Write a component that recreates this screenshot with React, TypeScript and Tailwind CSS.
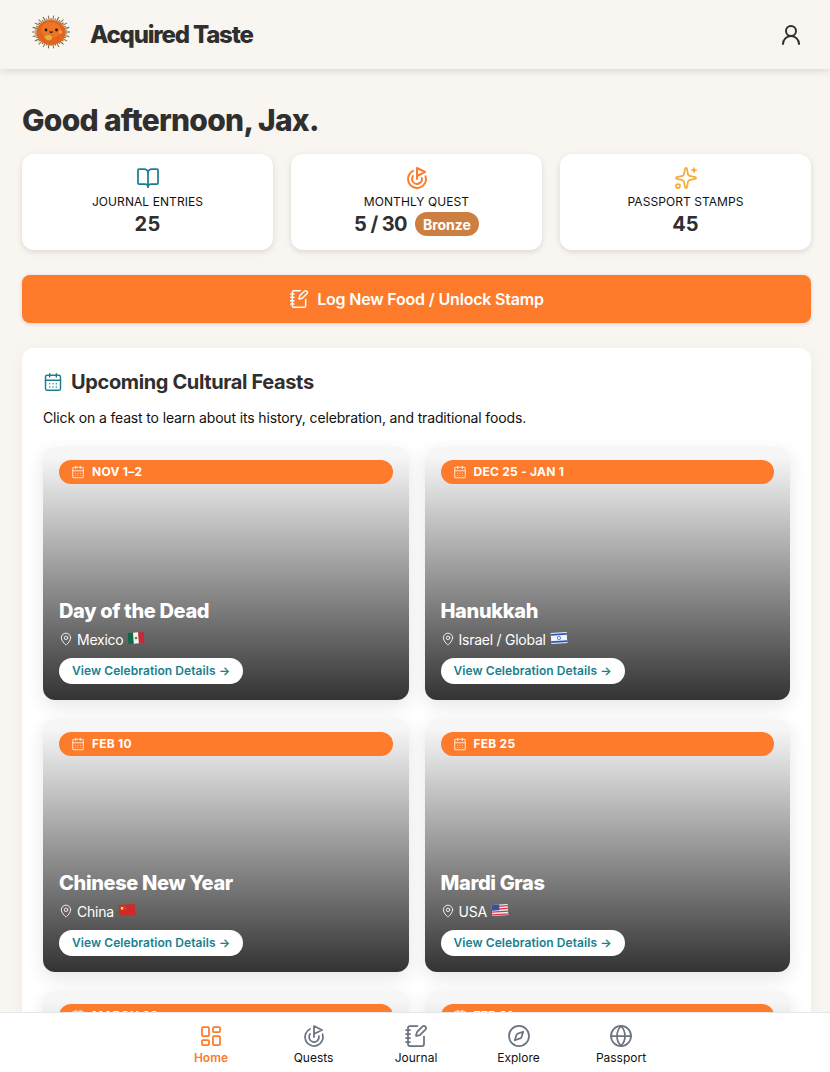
import { BookOpen, Goal, Sparkles, NotebookPen, CalendarDays, MapPin, LayoutDashboard, Compass, Globe, UserRound } from 'lucide-react';

const font = { fontFamily: 'Inter, "Liberation Sans", sans-serif' };

function Urchin() {
  const spikes = Array.from({ length: 44 }, (_, i) => (i / 44) * Math.PI * 2);
  return (
    <svg width="42" height="36" viewBox="0 0 42 36" className="shrink-0 -mt-[6px]">
      {spikes.map((a, i) => {
        const len = i % 2 === 0 ? 19 : 16.5;
        return (
          <line
            key={i}
            x1={20 + Math.cos(a) * 11}
            y1={18 + Math.sin(a) * 10}
            x2={20 + Math.cos(a) * len}
            y2={18 + Math.sin(a) * (len - 2.5)}
            stroke={i % 3 === 0 ? '#5f6a4c' : '#94794a'}
            strokeWidth="1.1"
          />
        );
      })}
      <ellipse cx="20" cy="18.5" rx="14.5" ry="12.5" fill="#e4641c" />
      <ellipse cx="20" cy="16" rx="10" ry="8" fill="#ef7426" />
      <circle cx="15" cy="16" r="1.4" fill="#2a1a10" />
      <circle cx="25.5" cy="16" r="1.4" fill="#2a1a10" />
      <path d="M18 17.5 q2.2 3 4.4 0 z" fill="#3a1a10" />
      <circle cx="29.5" cy="18" r="1.7" fill="#f3a05a" />
      <path d="M12.5 22 q5 -3 9 -0.5 q1.5 4 -3 5.5 q-4 0.5 -6 -5 z" fill="#f4a63c" stroke="#9a5a18" strokeWidth="0.5" />
    </svg>
  );
}

function Flag({ country }: { country: string }) {
  return (
    <svg width="18" height="14" viewBox="0 0 18 14" className="shrink-0 -mt-[3px]">
      <g transform="rotate(-4 9 7)">
        {country === 'mx' && (
          <>
            <rect x="1" y="1.5" width="5.4" height="11" fill="#0f6b48" />
            <rect x="6.4" y="1.5" width="5.2" height="11" fill="#f4f4f0" />
            <rect x="11.6" y="1.5" width="5.4" height="11" fill="#c8283a" />
            <circle cx="9" cy="7" r="1.3" fill="#8a6a3a" />
          </>
        )}
        {country === 'il' && (
          <>
            <rect x="1" y="1.5" width="16" height="11" fill="#f2f4f8" />
            <rect x="1" y="2.5" width="16" height="1.8" fill="#2a55b8" />
            <rect x="1" y="9.7" width="16" height="1.8" fill="#2a55b8" />
            <circle cx="9" cy="7" r="1.6" fill="none" stroke="#2a55b8" strokeWidth="0.7" />
          </>
        )}
        {country === 'cn' && (
          <>
            <rect x="1" y="1.5" width="16" height="11" fill="#cf2a27" />
            <circle cx="4.2" cy="4.8" r="1.5" fill="#f6d33c" />
            <circle cx="7.2" cy="3.2" r="0.4" fill="#f6d33c" />
            <circle cx="7.6" cy="5.4" r="0.4" fill="#f6d33c" />
          </>
        )}
        {country === 'us' && (
          <>
            <rect x="1" y="1.5" width="16" height="11" fill="#f3f3f3" />
            <rect x="1" y="2.6" width="16" height="1.3" fill="#d0344a" />
            <rect x="1" y="5.3" width="16" height="1.3" fill="#d0344a" />
            <rect x="1" y="8" width="16" height="1.3" fill="#d0344a" />
            <rect x="1" y="10.7" width="16" height="1.3" fill="#d0344a" />
            <rect x="1" y="1.5" width="7.5" height="5.6" fill="#3c4f9c" />
          </>
        )}
      </g>
    </svg>
  );
}

function Stat({ icon, label, children }: { icon: React.ReactNode; label: string; children: React.ReactNode }) {
  return (
    <div className="h-[96px] bg-white rounded-xl shadow-[0_2px_6px_rgba(0,0,0,0.12)] flex flex-col items-center pt-[12px]">
      {icon}
      <div className="mt-[4px] text-[12px] leading-[16px] tracking-[0.07px] text-[#111]">{label}</div>
      <div className="mt-[1px] h-[26px] flex items-center gap-2 text-[20px] font-bold tracking-[0.2px] text-[#2f2f2f]">{children}</div>
    </div>
  );
}

const feasts = [
  { date: 'NOV 1–2', name: 'Day of the Dead', place: 'Mexico', flag: 'mx' },
  { date: 'DEC 25 - JAN 1', name: 'Hanukkah', place: 'Israel / Global', flag: 'il' },
  { date: 'FEB 10', name: 'Chinese New Year', place: 'China', flag: 'cn' },
  { date: 'FEB 25', name: 'Mardi Gras', place: 'USA', flag: 'us' },
  { date: 'MARCH 03', name: 'Holi', place: 'India', flag: 'us' },
  { date: 'FEB 21', name: 'Ramadan', place: 'Global', flag: 'us' },
];

function FeastCard({ date, name, place, flag }: { date: string; name: string; place: string; flag: string }) {
  return (
    <div className="h-[253px] rounded-xl bg-linear-to-b/srgb from-[#f6f6f6] from-[4%] to-[#333333] shadow-[0_6px_18px_rgba(0,0,0,0.1)] px-4 pt-[13px] pb-4 flex flex-col">
      <div className="h-6 rounded-full bg-[#fd7b2b] flex items-center gap-[7px] pl-[12px] text-white text-[12px] tracking-[0.25px] font-bold">
        <CalendarDays size={14} strokeWidth={1.75} className="text-[#ffe3d0]" />
        {date}
      </div>
      <div className="mt-auto -translate-y-px text-[20px] leading-7 font-extrabold tracking-[-0.35px] text-white">{name}</div>
      <div className="mt-[3px] h-5 flex items-center gap-[4px] text-[14px] tracking-[-0.25px] text-white">
        <MapPin size={14} strokeWidth={1.5} />
        <span>{place}</span>
        <Flag country={flag} />
      </div>
      <div className="mt-[9px] self-start h-[26px] rounded-full bg-white px-[13px] flex items-center text-[12px] font-semibold tracking-[0.07px] text-[#1a7f8f]">
        View Celebration Details →
      </div>
    </div>
  );
}

function NavItem({ icon, label, active }: { icon: React.ReactNode; label: string; active?: boolean }) {
  return (
    <div className={`w-[102.5px] flex flex-col items-center ${active ? 'text-[#fd7b2b]' : 'text-[#6b7280]'}`}>
      {icon}
      <span className={`mt-[2px] text-[12px] leading-4 ${active ? 'font-semibold' : 'text-[#111]'}`}>{label}</span>
    </div>
  );
}

export default function App() {
  return (
    <div className="relative h-screen overflow-hidden bg-[#f9f5f0]" style={font}>
      <header className="relative z-10 h-[69px] bg-[#f9f5f0] shadow-[0_2px_8px_rgba(0,0,0,0.12)] flex items-center pl-[31px] pr-[27px]">
        <Urchin />
        <div className="ml-[17px] text-[24px] font-extrabold tracking-[-1.2px] text-[#2f2f2f]">Acquired Taste</div>
        <UserRound size={24} strokeWidth={2} className="ml-auto text-[#2f2f2f]" />
      </header>

      <main className="pl-[22px] pr-[19px] pt-[32px]">
        <h1 className="text-[30px] leading-[38px] font-extrabold tracking-[-0.7px] text-[#2f2f2f]">Good afternoon, Jax.</h1>

        <div className="mt-[15px] grid grid-cols-3 gap-[18px]">
          <Stat icon={<BookOpen size={24} strokeWidth={1.75} className="text-[#1a7f8f]" />} label="JOURNAL ENTRIES">25</Stat>
          <Stat icon={<Goal size={24} strokeWidth={2} className="text-[#fd7b2b]" />} label="MONTHLY QUEST">
            <span className="tracking-[-0.6px]">5 / 30</span>
            <span className="h-6 rounded-full bg-[#cd7f42] px-2 flex items-center text-[14px] font-bold tracking-normal text-white">Bronze</span>
          </Stat>
          <Stat icon={<Sparkles size={24} strokeWidth={1.75} className="text-[#f6ad37]" />} label="PASSPORT STAMPS">45</Stat>
        </div>

        <div className="mt-[25px] h-[48px] rounded-lg bg-[#fd7b2b] shadow-[0_1px_4px_rgba(0,0,0,0.15)] flex items-center justify-center gap-2 text-white text-[16px] font-semibold tracking-[-0.19px]">
          <NotebookPen size={20} strokeWidth={1.75} />
          Log New Food / Unlock Stamp
        </div>

        <section className="mt-[25px] bg-white rounded-xl shadow-[0_4px_16px_rgba(0,0,0,0.05)] px-[21px] pt-[20px]">
          <div className="flex items-center gap-2 h-7">
            <CalendarDays size={20} strokeWidth={1.75} className="text-[#1a7f8f]" />
            <h2 className="text-[20px] font-bold tracking-[-0.37px] text-[#2f2f2f]">Upcoming Cultural Feasts</h2>
          </div>
          <p className="mt-[12px] text-[14px] leading-5 tracking-[-0.15px] text-[#111]">
            Click on a feast to learn about its history, celebration, and traditional foods.
          </p>
          <div className="mt-[19px] grid grid-cols-2 gap-x-4 gap-y-[19px]">
            {feasts.map(f => (
              <FeastCard key={f.name} {...f} />
            ))}
          </div>
        </section>
      </main>

      <nav className="absolute inset-x-0 bottom-0 z-20 h-[60px] bg-white border-t border-[#e5e7eb] flex justify-center pl-[2px] pt-[11px]">
        <NavItem active icon={<LayoutDashboard size={24} strokeWidth={1.75} />} label="Home" />
        <NavItem icon={<Goal size={24} strokeWidth={1.75} />} label="Quests" />
        <NavItem icon={<NotebookPen size={24} strokeWidth={1.75} />} label="Journal" />
        <NavItem icon={<Compass size={24} strokeWidth={1.75} />} label="Explore" />
        <NavItem icon={<Globe size={24} strokeWidth={1.75} />} label="Passport" />
      </nav>
    </div>
  );
}
